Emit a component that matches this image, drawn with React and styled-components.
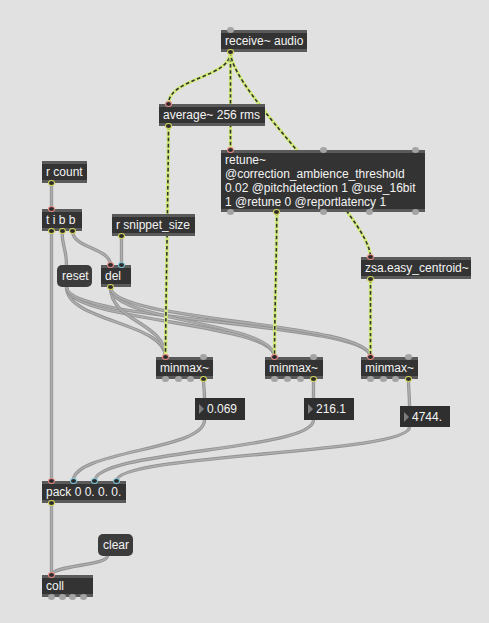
import styled, { createGlobalStyle } from 'styled-components'

const GlobalStyle = createGlobalStyle`
  html, body {
    margin: 0;
    padding: 0;
    background: #e1e1e1;
  }
  body {
    font-family: "Liberation Sans", Arial, sans-serif;
  }
`

const Patcher = styled.div`
  position: relative;
  width: 489px;
  height: 623px;
  background: #e1e1e1;
  overflow: hidden;
`

const CordLayer = styled.svg`
  position: absolute;
  left: 0;
  top: 0;
`

const Node = styled.div`
  position: absolute;
  left: ${p => p.x}px;
  top: ${p => p.y}px;
  width: ${p => p.w}px;
`

const ObjectBody = styled.div`
  box-sizing: border-box;
  background: #333333;
  border-top: 3px solid #5a5a5a;
  border-bottom: 3px solid #5a5a5a;
  padding: ${p => (p.multi ? '0 4px' : '1px 4px')};
  color: #f4f4f4;
  font-size: 12px;
  line-height: 14px;
  white-space: nowrap;
`

const MessageBody = styled.div`
  box-sizing: border-box;
  height: 22px;
  background: #3c3c3c;
  border-radius: 5px;
  padding: 4px 5px;
  color: #f4f4f4;
  font-size: 12px;
  line-height: 14px;
`

const NumberBody = styled.div`
  box-sizing: border-box;
  height: ${p => p.h}px;
  background: #2f2f2f;
  display: flex;
  align-items: center;
  gap: 3px;
  padding: 0 4px;
  color: #f4f4f4;
  font-size: 12px;
`

const Arrow = styled.span`
  width: 0;
  height: 0;
  border-top: 5.5px solid transparent;
  border-bottom: 5.5px solid transparent;
  border-left: 5.5px solid #7c7c7c;
`

const portColors = {
  hot: '#ee8d88',
  cold: '#7ec8da',
  on: '#d8d85c',
}

const Port = styled.span`
  position: absolute;
  box-sizing: border-box;
  left: ${p => p.px - 3.5}px;
  ${p => (p.side === 'top' ? 'top: -3px;' : 'bottom: -3px;')}
  width: 7px;
  height: 6px;
  border-radius: 50%;
  background: ${p => (p.state === 'off' ? '#a4a4a4' : '#2c2c2c')};
  border: ${p => (p.state === 'off' ? 'none' : `1.4px solid ${portColors[p.state]}`)};
`

// patch data, coordinates as in the patcher window
const objects = {
  receive: { x: 221, y: 30, w: 86, text: ['receive~ audio'], ins: ['off'], outs: ['on'] },
  average: { x: 159, y: 104, w: 106, text: ['average~ 256 rms'], ins: ['hot'], outs: ['on'] },
  retune: {
    x: 221, y: 150, w: 204, h: 62,
    text: [
      'retune~',
      '@correction_ambience_threshold',
      '0.02 @pitchdetection 1 @use_16bit',
      '1 @retune 0 @reportlatency 1',
    ],
    ins: ['hot', 'off', 'off'],
    outs: ['off', 'on', 'off', 'off', 'off'],
  },
  rcount: { x: 42, y: 161, w: 45, text: ['r count'], ins: [], outs: ['on'] },
  tibb: { x: 42, y: 209, w: 40, text: ['t i b b'], ins: ['hot'], outs: ['on', 'on', 'on'] },
  rsnip: { x: 112, y: 214, w: 83, text: ['r snippet_size'], ins: [], outs: ['on'] },
  del: { x: 101, y: 265, w: 30, text: ['del'], ins: ['hot', 'cold'], outs: ['on'] },
  zsa: { x: 361, y: 257, w: 110, text: ['zsa.easy_centroid~'], ins: ['hot'], outs: ['on'] },
  mm1: { x: 156, y: 357, w: 57, text: ['minmax~'], ins: ['hot', 'off'], outs: ['off', 'off', 'off', 'on'] },
  mm2: { x: 265, y: 357, w: 58, text: ['minmax~'], ins: ['hot', 'off'], outs: ['off', 'off', 'off', 'on'] },
  mm3: { x: 361, y: 357, w: 57, text: ['minmax~'], ins: ['hot', 'off'], outs: ['off', 'off', 'off', 'on'] },
  pack: { x: 42, y: 481, w: 84, text: ['pack 0 0. 0. 0.'], ins: ['hot', 'cold', 'cold', 'cold'], outs: ['on'] },
  coll: { x: 42, y: 575, w: 51, text: ['coll'], ins: ['hot'], outs: ['off', 'off', 'off', 'off'] },
}

const messages = {
  reset: { x: 57, y: 265, w: 35, text: 'reset' },
  clear: { x: 98, y: 534, w: 35, text: 'clear' },
}

const numbers = {
  n1: { x: 195, y: 398, w: 50, h: 22, text: '0.069' },
  n2: { x: 304, y: 398, w: 50, h: 22, text: '216.1' },
  n3: { x: 400, y: 406, w: 50, h: 21, text: '4744.' },
}

const all = { ...objects, ...messages, ...numbers }

const portX = (w, i, n) => (n <= 1 ? 9.5 : 9.5 + (i * (w - 19)) / (n - 1))

const outPt = (id, i = 0) => {
  const o = all[id]
  const n = o.outs ? o.outs.length : 1
  return [o.x + portX(o.w, i, n), o.y + (o.h || 22)]
}

const inPt = (id, i = 0) => {
  const o = all[id]
  const n = o.ins ? o.ins.length : 1
  return [o.x + portX(o.w, i, n), o.y]
}

const signalCords = [
  ['receive', 0, 'average', 0],
  ['receive', 0, 'retune', 0],
  ['receive', 0, 'zsa', 0],
  ['average', 0, 'mm1', 0],
  ['retune', 1, 'mm2', 0],
  ['zsa', 0, 'mm3', 0],
]

const controlCords = [
  ['rcount', 0, 'tibb', 0],
  ['tibb', 0, 'pack', 0],
  ['tibb', 1, 'reset', 0],
  ['tibb', 2, 'del', 0],
  ['rsnip', 0, 'del', 1],
  ['reset', 0, 'mm1', 0],
  ['reset', 0, 'mm2', 0],
  ['reset', 0, 'mm3', 0],
  ['del', 0, 'mm1', 0],
  ['del', 0, 'mm2', 0],
  ['del', 0, 'mm3', 0],
  ['mm1', 3, 'n1', 0],
  ['mm2', 3, 'n2', 0],
  ['mm3', 3, 'n3', 0],
  ['n1', 0, 'pack', 1],
  ['n2', 0, 'pack', 2],
  ['n3', 0, 'pack', 3],
  ['pack', 0, 'coll', 0],
  ['clear', 0, 'coll', 0],
]

const cordPath = ([from, o, to, i]) => {
  const [x1, y1] = outPt(from, o)
  const [x2, y2] = inPt(to, i)
  const k = Math.min(40, Math.max(8, Math.abs(y2 - y1) * 0.5))
  return `M${x1},${y1} C${x1},${y1 + k} ${x2},${y2 - k} ${x2},${y2}`
}

const Cords = () => (
  <CordLayer width="489" height="623">
    {controlCords.map((c, idx) => (
      <g key={'c' + idx} fill="none" strokeLinecap="round">
        <path d={cordPath(c)} stroke="#939393" strokeWidth="3.3" />
        <path d={cordPath(c)} stroke="#aeaeae" strokeWidth="1.5" />
      </g>
    ))}
    {signalCords.map((c, idx) => (
      <g key={'s' + idx} fill="none">
        <path d={cordPath(c)} stroke="#d2ec7a" strokeWidth="3.4" />
        <path d={cordPath(c)} stroke="#333" strokeWidth="1.6" strokeDasharray="3.5 2.5" />
      </g>
    ))}
  </CordLayer>
)

const MaxObject = ({ o }) => (
  <Node x={o.x} y={o.y} w={o.w}>
    <ObjectBody multi={o.text.length > 1}>
      {o.text.map(line => (
        <div key={line}>{line}</div>
      ))}
    </ObjectBody>
    {o.ins.map((s, i) => (
      <Port key={'i' + i} side="top" state={s} px={portX(o.w, i, o.ins.length)} />
    ))}
    {o.outs.map((s, i) => (
      <Port key={'o' + i} side="bottom" state={s} px={portX(o.w, i, o.outs.length)} />
    ))}
  </Node>
)

const Message = ({ m }) => (
  <Node x={m.x} y={m.y} w={m.w}>
    <MessageBody>{m.text}</MessageBody>
  </Node>
)

const NumberBox = ({ n }) => (
  <Node x={n.x} y={n.y} w={n.w}>
    <NumberBody h={n.h}>
      <Arrow />
      {n.text}
    </NumberBody>
  </Node>
)

export default function App() {
  return (
    <Patcher>
      <GlobalStyle />
      <Cords />
      {Object.entries(objects).map(([id, o]) => (
        <MaxObject key={id} o={o} />
      ))}
      {Object.entries(messages).map(([id, m]) => (
        <Message key={id} m={m} />
      ))}
      {Object.entries(numbers).map(([id, n]) => (
        <NumberBox key={id} n={n} />
      ))}
    </Patcher>
  )
}
